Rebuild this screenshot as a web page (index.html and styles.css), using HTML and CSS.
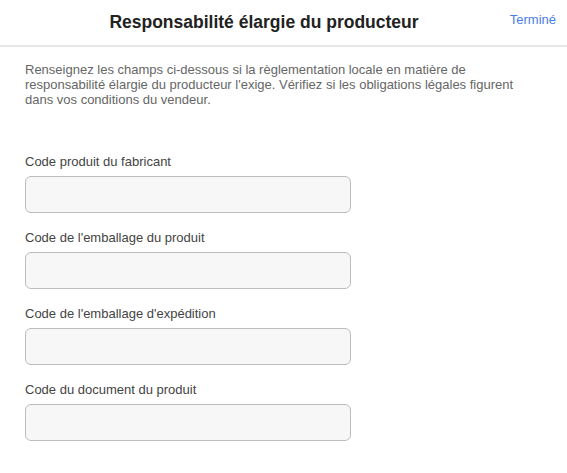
FILE: index.html
```html
<!DOCTYPE html>
<html lang="fr">
<head>
<meta charset="utf-8">
<title>Responsabilité élargie du producteur</title>
<link rel="stylesheet" href="styles.css">
</head>
<body>
<header class="header">
  <h1 class="title">Responsabilité élargie du producteur</h1>
  <a class="done" href="#">Terminé</a>
</header>
<main class="content">
  <p class="intro">Renseignez les champs ci-dessous si la règlementation locale en matière de responsabilité élargie du producteur l'exige. Vérifiez si les obligations légales figurent dans vos conditions du vendeur.</p>
  <form class="fields">
    <div class="field">
      <label class="label" for="f1">Code produit du fabricant</label>
      <input class="input" id="f1" type="text">
    </div>
    <div class="field">
      <label class="label" for="f2">Code de l'emballage du produit</label>
      <input class="input" id="f2" type="text">
    </div>
    <div class="field">
      <label class="label" for="f3">Code de l'emballage d'expédition</label>
      <input class="input" id="f3" type="text">
    </div>
    <div class="field">
      <label class="label" for="f4">Code du document du produit</label>
      <input class="input" id="f4" type="text">
    </div>
  </form>
</main>
</body>
</html>
```
FILE: styles.css
```css
* { box-sizing: border-box; }
html, body { margin: 0; padding: 0; background: #fff; }
body {
  font-family: "Liberation Sans", Arial, sans-serif;
  color: #333;
}
.header {
  height: 47px;
  border-bottom: 2px solid #e6e6e6;
  display: flex;
  align-items: center;
  justify-content: center;
  padding-right: 39px;
  position: relative;
}
.title {
  margin: 0 0 2px 0;
  font-size: 17.5px;
  line-height: 20px;
  font-weight: bold;
  color: #222;
}
.done {
  position: absolute;
  right: 11px;
  top: 12px;
  font-size: 13px;
  line-height: 15px;
  color: #4a7ee6;
  text-decoration: none;
}
.content {
  padding: 15px 24px 0 25px;
}
.intro {
  margin: 0;
  font-size: 13px;
  line-height: 15px;
  color: #666;
  max-width: 520px;
}
.fields {
  margin-top: 47px;
  display: flex;
  flex-direction: column;
  gap: 17px;
}
.field {
  display: flex;
  flex-direction: column;
}
.label {
  font-size: 13px;
  line-height: 15px;
  color: #444;
  margin-bottom: 7px;
}
.input {
  width: 326px;
  height: 37px;
  border: 1px solid #bdbdbd;
  border-radius: 6px;
  background: #f7f7f7;
  font: inherit;
}
```
